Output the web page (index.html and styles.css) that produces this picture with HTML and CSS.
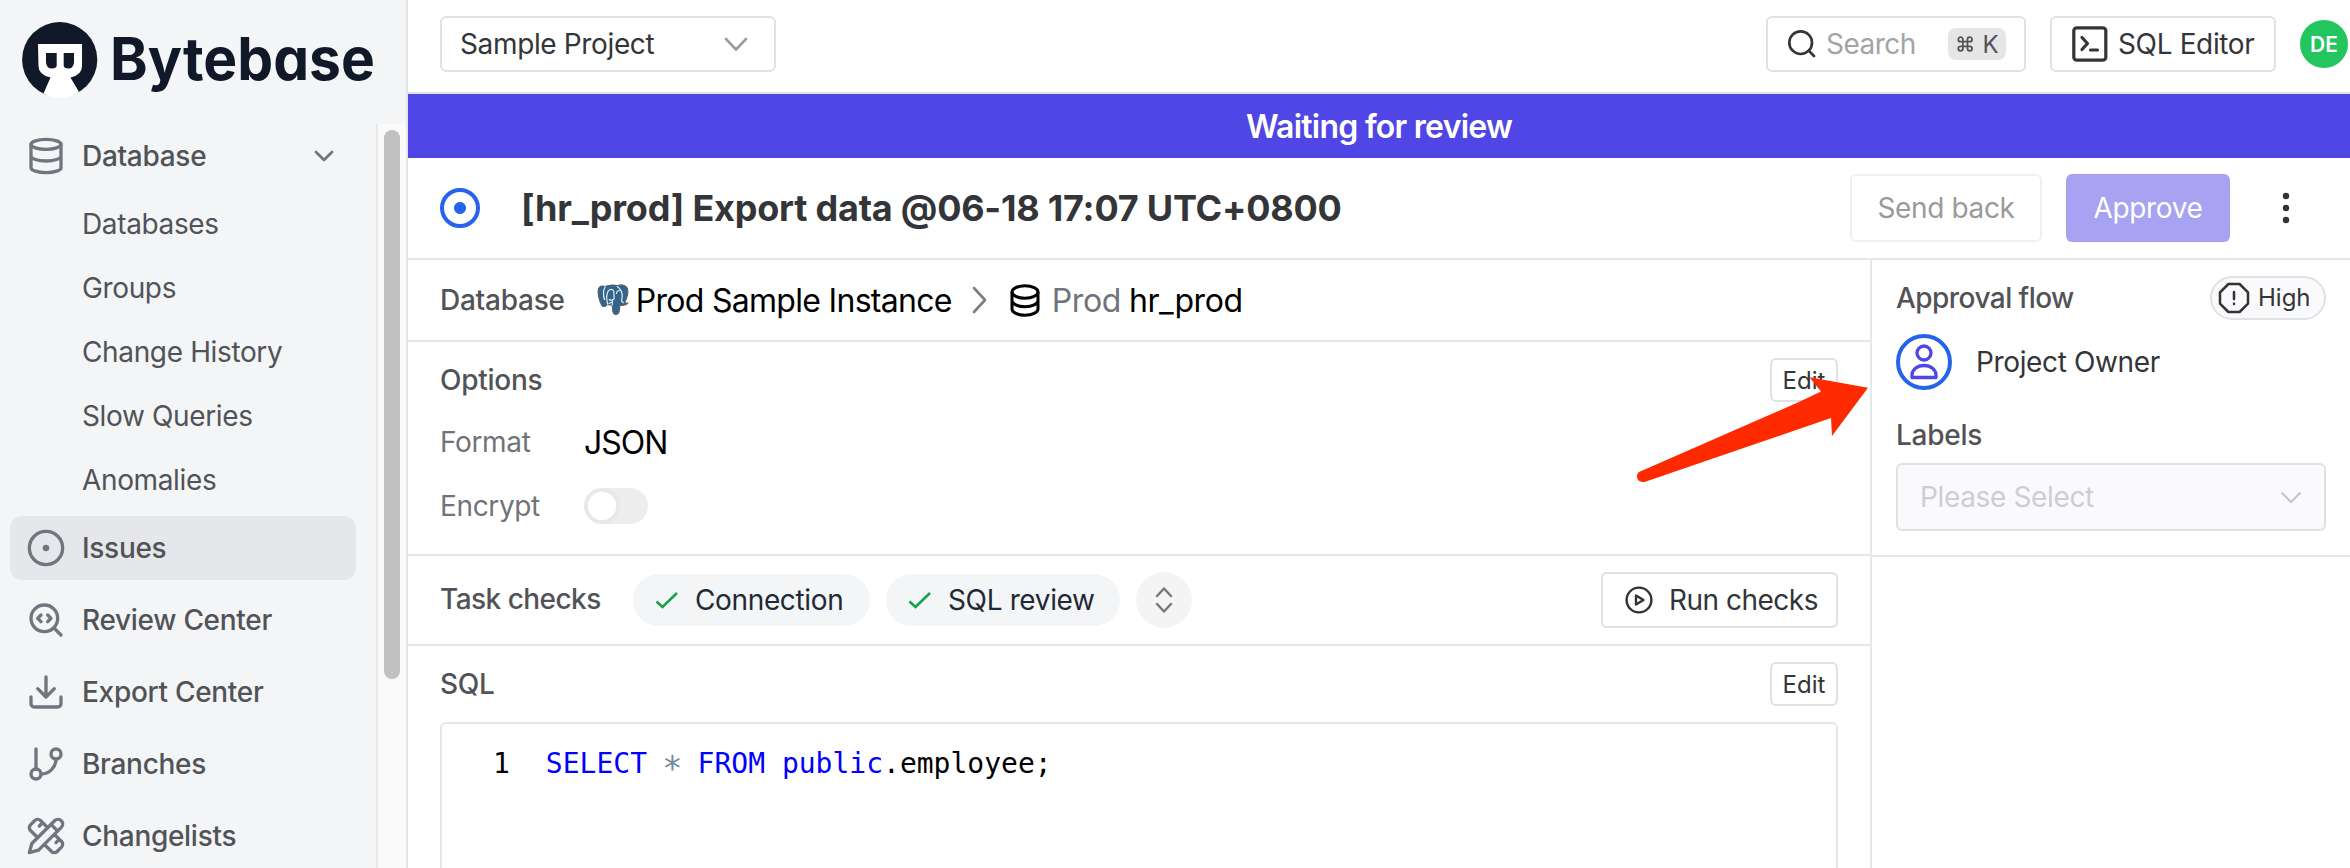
FILE: index.html
```
<!DOCTYPE html>
<html lang="en">
<head>
<meta charset="utf-8">
<title>Bytebase</title>
<link rel="stylesheet" href="styles.css">
</head>
<body>
<div class="app">
  <aside class="sidebar">
    <div class="brand">
      <svg width="376" height="124" viewBox="0 0 376 124">
        <circle cx="59.7" cy="59.7" r="37.6" fill="#111827"/>
        <path d="M38 44H82V66Q82 75 70.500 77.500L79 92Q70 98 60 98Q51 98 43.500 93.500L50.500 77.500Q38.500 75 38.500 66Z" fill="#fff"/>
        <path d="M46 53H56.700V66Q56 68.500 51.500 68.500Q47 68.500 46 63ZM63.700 53H74V63Q73 68.500 68.500 68.500Q64.500 68.500 63.700 66Z" fill="#111827"/>
        <text class="wordmark" x="110" y="80" textLength="265" lengthAdjust="spacingAndGlyphs">Bytebase</text>
      </svg>
    </div>
    <div class="side-body">
      <nav class="nav">
        <a class="item"><svg class="ic" viewBox="0 0 24 24"><ellipse cx="12" cy="5" rx="9" ry="3"/><path d="M3 5V19A9 3 0 0 0 21 19V5M3 12A9 3 0 0 0 21 12"/></svg><span class="grow">Database</span><svg class="ic chev" viewBox="0 0 24 24"><path d="m6 9 6 6 6-6"/></svg></a>
        <div class="children">
          <a class="child">Databases</a>
          <a class="child">Groups</a>
          <a class="child">Change History</a>
          <a class="child">Slow Queries</a>
          <a class="child">Anomalies</a>
        </div>
        <a class="item active"><svg class="ic" viewBox="0 0 24 24"><circle cx="12" cy="12" r="10"/><circle cx="12" cy="12" r="1"/></svg><span>Issues</span></a>
        <a class="item"><svg class="ic" viewBox="0 0 24 24"><path d="m9 9-2 2 2 2M13 13l2-2-2-2"/><circle cx="11" cy="11" r="8"/><path d="m21 21-4.300-4.300"/></svg><span>Review Center</span></a>
        <a class="item"><svg class="ic" viewBox="0 0 24 24"><path d="M21 15v4a2 2 0 0 1-2 2H5a2 2 0 0 1-2-2v-4M7 10l5 5 5-5M12 15V3"/></svg><span>Export Center</span></a>
        <a class="item"><svg class="ic" viewBox="0 0 24 24"><path d="M6 3V15"/><circle cx="18" cy="6" r="3"/><circle cx="6" cy="18" r="3"/><path d="M18 9a9 9 0 0 1-9 9"/></svg><span>Branches</span></a>
        <a class="item"><svg class="ic" viewBox="0 0 24 24"><path d="m15 5 4 4M13 7 8.700 2.700a2.410 2.410 0 0 0-3.400 0L2.700 5.300a2.410 2.410 0 0 0 0 3.400L7 13M8 6l2-2M2 22l5.500-1.500L21.170 6.830a2.820 2.820 0 0 0-4-4L3.500 16.500ZM18 16l2-2M17 11l4.300 4.300c.94.94.94 2.460 0 3.400l-2.600 2.600c-.94.94-2.460.94-3.400 0L11 17"/></svg><span>Changelists</span></a>
      </nav>
      <div class="track"><div class="thumb"></div></div>
    </div>
  </aside>

  <main class="main">
    <header class="topbar">
      <div class="box project"><span>Sample Project</span><svg width="24" height="15" viewBox="0 0 24 15"><path d="M2 2l10 10.500L22 2" fill="none" stroke="#9a9ca1" stroke-width="2.600" stroke-linecap="round"/></svg></div>
      <div class="box search"><svg class="ic dark" viewBox="0 0 24 24"><circle cx="11" cy="11" r="8.500"/><path d="m21 21-4-4"/></svg><span>Search</span><kbd><svg width="20" height="20" viewBox="0 0 24 24" fill="none" stroke="#515357" stroke-width="2.300"><path d="M15 6v12a3 3 0 1 0 3-3H6a3 3 0 1 0 3 3V6a3 3 0 1 0-3 3h12a3 3 0 1 0-3-3"/></svg><b>K</b></kbd></div>
      <div class="box editor"><svg class="term dark" viewBox="0 0 36 36"><rect x="1.800" y="1.800" width="32" height="32.400" rx="3"/><path d="M10 11.500l5.500 6-5.500 6M18.500 24h7"/></svg><span>SQL Editor</span></div>
      <div class="avatar">DE</div>
    </header>
    <div class="banner">Waiting for review</div>
    <div class="titlebar">
      <div class="status"></div>
      <h1>[hr_prod] Export data @06-18 17:07 UTC+0800</h1>
      <button class="btn back">Send back</button>
      <button class="btn approve">Approve</button>
      <svg class="dots" width="40" height="40" viewBox="0 0 40 40" fill="#333"><circle cx="20" cy="8" r="3.200"/><circle cx="20" cy="20" r="3.200"/><circle cx="20" cy="32" r="3.200"/></svg>
    </div>
    <div class="columns">
      <div class="left">
        <section class="dbrow">
          <span class="label">Database</span>
          <svg class="pg" width="32" height="32" viewBox="0 0 32 32">
            <path d="M8 2.500C3 .8.800 4 1.200 9c.4 5 2.400 11.500 4.600 13.200 1.600 1.200 3-.3 4.800-2l2 .6c1 .2 1.700.1 2.700-.1.300 3-.3 6.300 1.300 8.600 1.300 1.700 4.200 1.400 5.200-.8.900-2 .6-5 1.100-7.400 2.800.4 6.600-.1 7.800-1.900-1.200-.2-2.200.1-3.200-.4C30 14.500 32.300 6.500 29.600 3.200c-2.300-2.800-6.500-2.600-9.300-1.700C16.500.7 11.800 1 8 2.500Z" fill="#32648d" stroke="#55636e" stroke-width="1.200"/>
            <path d="M10.600 20.200c-1.300-5-1-10 .6-13.200 1.700-2.200 4.400-2.200 5.400 0 .8 2.200 0 5 .6 7.400-1.200 2.600-3 2-5 1.200M20.300 2.500c3.200 2.400 5.200 7 4.900 10.500-.2 2.400-2 4.500 1.100 5.600M8.200 3C6 6 6 12 7.600 15.500M22.800 6.500c-2 0-3.300.9-3.300 2.900M15.300 20.700v-4.400M12 19.500c1.500-1 2.500-1.500 3.400-1.400" fill="none" stroke="#e7edf2" stroke-width="1.200" stroke-linecap="round"/>
          </svg>
          <span class="inst">Prod Sample Instance</span>
          <svg class="sep" width="16" height="28" viewBox="0 0 16 28"><path d="M2 2l11 12L2 26" fill="none" stroke="#7b7f86" stroke-width="2.600" stroke-linecap="round" stroke-linejoin="round"/></svg>
          <svg class="dbi" width="30" height="33" viewBox="0 0 30 33" fill="none" stroke="#000" stroke-width="3"><ellipse cx="15" cy="8" rx="13" ry="6.300"/><path d="M2 8v17c0 3.500 5.800 6.300 13 6.300S28 28.500 28 25V8M2 16.500c0 3.500 5.800 6.300 13 6.300s13-2.800 13-6.300"/></svg>
          <span class="env">Prod</span><span class="inst">hr_prod</span>
        </section>
        <section class="options">
          <div class="head"><span class="label">Options</span><button class="edit">Edit</button></div>
          <div class="opt"><span>Format</span><em>JSON</em></div>
          <div class="opt"><span>Encrypt</span><i class="toggle"></i></div>
        </section>
        <section class="checks">
          <span class="label tight">Task checks</span>
          <div class="chip"><svg width="24" height="18" viewBox="0 0 24 18"><path d="M1.500 10.500l6 5.500L22 2"/></svg>Connection</div>
          <div class="chip two"><svg width="24" height="18" viewBox="0 0 24 18"><path d="M1.500 10.500l6 5.500L22 2"/></svg>SQL review</div>
          <div class="expand"><svg width="18" height="26" viewBox="0 0 18 26"><path d="M2 9l7-7.500L16 9M2 17l7 7.500L16 17" fill="none" stroke="#73767b" stroke-width="2.400" stroke-linecap="round" stroke-linejoin="round"/></svg></div>
          <button class="run"><svg width="28" height="28" viewBox="0 0 28 28" fill="none" stroke="#333" stroke-width="2.400"><circle cx="14" cy="14" r="12.400"/><path d="M11 9.500v9l7.500-4.500Z" stroke-linejoin="round"/></svg>Run checks</button>
        </section>
        <section class="sql">
          <div class="head"><span class="label">SQL</span><button class="edit">Edit</button></div>
          <div class="code"><span class="ln">1</span><code><b>SELECT</b> <i>*</i> <b>FROM</b> <b>public</b>.employee;</code></div>
        </section>
      </div>
      <aside class="right">
        <div class="panel">
          <div class="flow"><span class="label tight">Approval flow</span><span class="risk"><svg width="32" height="32" viewBox="0 0 32 32" fill="none" stroke="#333" stroke-width="2.500" stroke-linecap="round" stroke-linejoin="round"><path d="M10.400 2H21.600L30 10.400V21.600L21.600 30H10.400L2 21.600V10.400ZM16 10V17M16 21.800v.1"/></svg>High</span></div>
          <div class="owner"><span class="ring"><svg width="28" height="36" viewBox="0 0 28 36" fill="none" stroke="#4f46e5" stroke-width="3.300"><circle cx="14" cy="9" r="7"/><path d="M2 33.500V31a12 9.500 0 0 1 24 0v2.500Z" stroke-linejoin="round"/></svg></span>Project Owner</div>
          <div class="label labels">Labels</div>
          <div class="picker"><span>Please Select</span><svg width="22" height="13" viewBox="0 0 22 13"><path d="M1.500 1.500L11 11l9.500-9.500" fill="none" stroke="#c4c5c9" stroke-width="2"/></svg></div>
        </div>
      </aside>
    </div>
  </main>
</div>
<svg class="arrow" width="240" height="114" viewBox="1632 372 240 114"><path d="M1868 387.700L1809.500 377.300L1821 391.500L1800 401.500L1639 472C1634 477 1639 484 1646 481.500L1831 418L1832 436Z" fill="#ff2a00"/></svg>
</body>
</html>
```
FILE: styles.css
```
* { box-sizing: border-box; }
body { margin: 0; width: 2350px; height: 868px; overflow: hidden; background: #fff; color: #333538; font: 28px/40px Inter, "Liberation Sans", sans-serif; letter-spacing: -0.36px; }
button { font: inherit; letter-spacing: inherit; color: inherit; background: #fff; padding: 0; }
h1 { margin: 0; }
.app { display: flex; height: 868px; }
.ic { width: 40px; height: 40px; flex: none; fill: none; stroke: #71757e; stroke-width: 2; stroke-linecap: round; stroke-linejoin: round; }

.sidebar { width: 408px; flex: none; display: flex; flex-direction: column; background: #f3f5f7; border-right: 2px solid #e3e4e6; }
.brand { height: 124px; }
.brand svg { display: block; overflow: visible; }
.wordmark { font: 700 59px Inter, sans-serif; font-feature-settings: "cv11"; letter-spacing: 0; fill: #111827; }
.side-body { flex: 1; display: flex; overflow: hidden; }
.nav { width: 376px; padding: 0 20px 0 10px; display: flex; flex-direction: column; gap: 8px; color: #515357; }
.item { flex: none; display: flex; align-items: center; gap: 16px; height: 64px; padding: 0 16px; border-radius: 12px; font-weight: 550; letter-spacing: -0.3px; }
.item.active { background: #e5e7eb; }
.grow { flex: 1; }
.chev { width: 32px; height: 32px; }
.children { display: flex; flex-direction: column; margin: -4px 0; padding-left: 72px; }
.child { height: 64px; line-height: 65px; }
.track { width: 30px; background: #fafafa; border-left: 2px solid #e6e7e7; padding: 6px 0 0 6px; }
.thumb { width: 16px; height: 549px; border-radius: 8px; background: #c1c1c1; }

.main { flex: 1; min-width: 0; display: flex; flex-direction: column; }
.topbar { height: 94px; flex: none; display: flex; align-items: center; padding: 0 2px 4px 32px; border-bottom: 2px solid #e2e5ec; }
.box { height: 56px; border: 2px solid #e0e1e5; border-radius: 6px; display: flex; align-items: center; }
.project { width: 336px; padding: 0 26px 0 18px; justify-content: space-between; }
.search { width: 260px; margin-left: auto; padding-left: 18px; color: #a3a4a8; letter-spacing: -0.5px; }
.search .ic { width: 32px; height: 32px; margin-right: 8px; }
.dark { stroke: #333538; }
.search kbd { display: flex; align-items: center; gap: 8px; width: 58px; height: 38px; margin-left: auto; margin-right: 18px; padding: 0 8px; border-radius: 8px; height: 32px; background: #e5e5e6; color: #515357; font: 24px Inter, sans-serif; }
.search kbd b { font-weight: 400; }
.editor { width: 226px; margin: 0 24px; padding-left: 20px; gap: 10px; }
.term { width: 36px; height: 36px; fill: none; stroke-width: 3.2; stroke-linecap: round; stroke-linejoin: round; flex: none; }
.avatar { width: 48px; height: 48px; flex: none; border-radius: 50%; background: #22c55e; color: #fff; font: 600 21px/49px Inter, sans-serif; letter-spacing: 0; text-align: center; }
.banner { height: 64px; flex: none; background: #4f46e5; color: #fff; text-align: center; font-weight: 570; font-size: 32px; line-height: 66px; letter-spacing: -0.75px; }
.titlebar { height: 102px; flex: none; display: flex; align-items: center; padding: 0 44px 0 32px; border-bottom: 2px solid #e5e7eb; }
.status { width: 40px; height: 40px; border: 4px solid #2563eb; border-radius: 50%; background: radial-gradient(circle, #2563eb 5.5px, #fff 6.5px); }
.titlebar h1 { flex: 1; margin-left: 41px; font-size: 36px; font-weight: 700; letter-spacing: -0.22px; }
.btn { height: 68px; border-radius: 6px; }
.back { width: 192px; border: 2px solid #f0f0f2; color: #999a9c; }
.approve { width: 164px; margin: 0 36px 0 24px; border: 0; background: #a7a2f1; color: #fff; }

.columns { flex: 1; display: flex; min-height: 0; }
.left { width: 1464px; flex: none; border-right: 2px solid #e5e7eb; display: flex; flex-direction: column; }
.left section { border-bottom: 2px solid #e5e7eb; padding: 0 32px; flex: none; }
.label { font-weight: 550; color: #515357; letter-spacing: -0.25px; }
.label.tight { letter-spacing: -0.54px; }
.left .dbrow { height: 82px; display: flex; align-items: center; }
.pg { margin: 0 7px 0 32px; }
.inst, .env { color: #000; font-size: 32px; line-height: 40px; padding-top: 2px; white-space: nowrap; letter-spacing: -0.7px; }
.env { color: #707379; margin-right: 8px; }
.env, .env + .inst { letter-spacing: -0.4px; }
.sep { margin: 0 22px 0 20px; }
.dbi { margin-right: 12px; }
.left .options { height: 214px; padding-top: 16px; }
.head { display: flex; align-items: center; justify-content: space-between; height: 44px; }
.edit { width: 68px; height: 44px; border: 2px solid #e0e1e5; border-radius: 6px; font-size: 24px; line-height: 40px; padding-top: 1px; letter-spacing: 0; }
.opt { display: flex; align-items: center; height: 64px; color: #707379; }
.head + .opt { margin-top: 8px; }
.opt span { width: 144px; }
.opt em { font-style: normal; font-size: 32px; padding-top: 2px; letter-spacing: -1px; color: #000; }
.toggle { width: 64px; height: 36px; border-radius: 18px; background: radial-gradient(circle at 18px 18px, #fff 13.5px, #e6e6e7 15px, #ededed 20px); }
.left .checks { height: 90px; display: flex; align-items: center; }
.checks .label { width: 161px; white-space: nowrap; padding-bottom: 3px; }
.chip { display: flex; align-items: center; height: 52px; width: 237px; margin-left: 32px; padding-left: 22px; gap: 16px; border-radius: 26px; background: #f3f5f7; color: #1f2937; white-space: nowrap; }
.chip.two { width: 234px; margin-left: 16px; }
.chip path { fill: none; stroke: #16a34a; stroke-width: 2.6; }
.expand { width: 56px; height: 56px; margin-left: 16px; border-radius: 50%; background: #f4f4f5; display: flex; align-items: center; justify-content: center; }
.run { margin-left: auto; width: 237px; height: 56px; border: 2px solid #e0e1e5; border-radius: 6px; display: flex; align-items: center; padding-left: 22px; gap: 16px; white-space: nowrap; letter-spacing: -0.5px; }
.left .sql { flex: 1; border: 0; padding-top: 16px; display: flex; flex-direction: column; }
.code { flex: 1; margin-top: 16px; border: 2px solid #e5e7eb; border-bottom: 0; border-radius: 6px 6px 0 0; display: flex; padding: 19px 0 0 51px; font: 28px/42px "DejaVu Sans Mono", monospace; letter-spacing: 0; color: #000; }
.code code { font: inherit; margin-left: 36px; }
.code b { font-weight: 400; color: #0000ff; }
.code i { display: inline-block; font-style: normal; color: #778899; transform: translateY(5px) scale(1.2); }

.right { flex: 1; }
.panel { height: 297px; padding: 16px 24px 0; border-bottom: 2px solid #e5e7eb; }
.flow { display: flex; align-items: center; justify-content: space-between; height: 44px; }
.risk { display: flex; align-items: center; gap: 8px; width: 116px; height: 44px; padding-left: 6px; border: 2px solid #e0e1e5; border-radius: 22px; background: #fafafc; font-size: 24px; letter-spacing: 0; }
.owner { display: flex; align-items: center; gap: 24px; height: 56px; margin-top: 14px; }
.ring { width: 56px; height: 56px; border: 4px solid #2563eb; border-radius: 50%; display: flex; align-items: center; justify-content: center; }
.labels { margin-top: 25px; }
.picker { height: 68px; margin-top: 8px; padding: 0 22px; border: 2px solid #e0e1e5; border-radius: 6px; background: #fafafc; color: #cdced1; display: flex; align-items: center; justify-content: space-between; }
.arrow { position: absolute; left: 1632px; top: 372px; }
```
